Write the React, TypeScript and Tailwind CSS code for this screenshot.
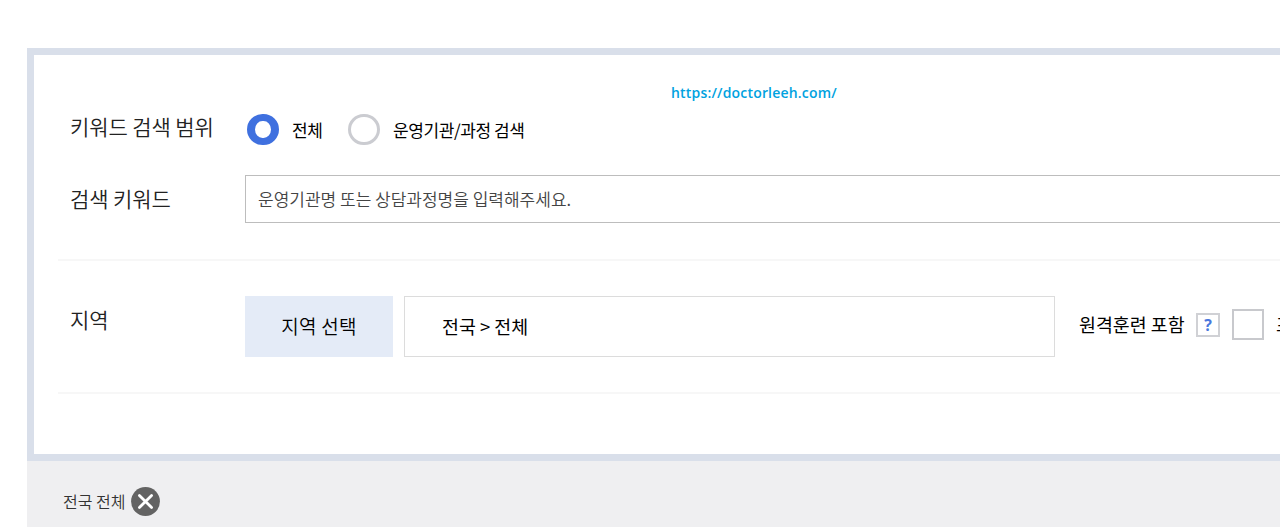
import { useState } from 'react'

type SearchScope = 'all' | 'course'

const SCOPE_OPTIONS: { label: string; value: SearchScope; width: string }[] = [
  { label: '전체', value: 'all', width: 'w-[101px]' },
  { label: '운영기관/과정 검색', value: 'course', width: '' },
]

function ScopeRadio({
  checked,
  label,
  onSelect,
}: {
  checked: boolean
  label: string
  onSelect: () => void
}) {
  return (
    <button
      aria-checked={checked}
      className="flex h-8 items-center whitespace-nowrap"
      onClick={onSelect}
      role="radio"
      type="button"
    >
      <span
        className={`mb-px h-[31px] w-8 shrink-0 rounded-full bg-white ${
          checked
            ? 'border-x-[8px] border-y-[7px] border-[#3f70df]'
            : 'border-[3px] border-[#cbccd1]'
        }`}
      />
      <span className="ml-[13px] text-[17px] leading-6 tracking-[-0.4px] text-black">
        {label}
      </span>
    </button>
  )
}

function App() {
  const [scope, setScope] = useState<SearchScope>('all')
  const [keyword, setKeyword] = useState('')

  return (
    <main className="h-[527px] overflow-hidden bg-white pl-[27px] pt-12 font-['Noto_Sans_CJK_KR',sans-serif]">
      <section className="h-[413px] border-y-[7px] border-l-[7px] border-[#d9dfea] pl-6">
        <div className="flex h-[59px] items-end pl-[613px]">
          <a
            className="mb-[11px] font-['Open_Sans','Noto_Sans',sans-serif] text-[14px] font-semibold leading-5 tracking-[0.18px] text-[#00a2e0]"
            href="https://doctorleeh.com/"
          >
            https://doctorleeh.com/
          </a>
        </div>

        <div className="flex h-8 items-center pl-3">
          <h2 className="w-[177px] shrink-0 pb-2 text-[21px] font-[350] leading-7 tracking-[-0.1px] text-[#222]">
            키워드 검색 범위
          </h2>
          <div className="flex" role="radiogroup">
            {SCOPE_OPTIONS.map((option) => (
              <div className={option.width} key={option.value}>
                <ScopeRadio
                  checked={scope === option.value}
                  label={option.label}
                  onSelect={() => setScope(option.value)}
                />
              </div>
            ))}
          </div>
        </div>

        <div className="mt-[29px] flex h-12 items-center pl-3">
          <h2 className="w-[175px] shrink-0 pb-[2px] text-[21px] font-[350] leading-7 tracking-[-0.1px] text-[#222]">
            검색 키워드
          </h2>
          <input
            className="h-12 flex-1 border-y border-l border-[#bdbdbd] bg-white pb-[2px] pl-3 text-[17px] font-[350] outline-none placeholder:text-[#444]"
            onChange={(event) => setKeyword(event.target.value)}
            placeholder="운영기관명 또는 상담과정명을 입력해주세요."
            type="text"
            value={keyword}
          />
        </div>

        <div className="mt-9 flex h-[135px] items-start overflow-hidden border-y-2 border-[#f7f7f7] pl-3 pt-[35px]">
          <h2 className="mt-[9px] w-[175px] shrink-0 text-[21px] font-[350] leading-7 text-[#222]">
            지역
          </h2>
          <button
            className="h-[61px] w-[148px] shrink-0 bg-[#e4ebf7] text-[19px] font-[350] tracking-[0.3px] text-black"
            type="button"
          >
            지역 선택
          </button>
          <div className="ml-[11px] flex h-[61px] w-[651px] shrink-0 items-center border border-[#dcdcdc] pl-[37px] text-[18.4px] text-black">
            전국 &gt; 전체
          </div>
          <div className="ml-6 flex h-[58px] shrink-0 items-center whitespace-nowrap text-[18.4px] text-black">
            <span className="w-[117px]">원격훈련 포함</span>
            <button
              className="grid h-6 w-6 place-items-center border-2 border-[#d0d1d5] font-['Open_Sans',sans-serif] text-[16px] font-bold leading-none text-[#4a78dd]"
              type="button"
            >
              ?
            </button>
            <span className="mb-[2px] ml-3 h-[31px] w-8 border-2 border-[#c8c9cd] bg-white" />
            <span className="ml-3 pb-px">포함</span>
          </div>
        </div>
      </section>

      <div className="flex h-[66px] items-center bg-[#efeff1] pl-9 pt-[14px]">
        <span className="w-[68px] text-[16px] font-[350] leading-6 text-[#333]">
          전국 전체
        </span>
        <button aria-label="전국 전체 삭제" type="button">
          <svg className="h-[29px] w-[29px]" fill="none" viewBox="0 0 30 30">
            <circle cx="15" cy="15" fill="#636363" r="14.9" />
            <path
              d="M8.7 8.7l12.6 12.6M21.3 8.7L8.7 21.3"
              stroke="#fff"
              strokeLinecap="round"
              strokeWidth="2.9"
            />
          </svg>
        </button>
      </div>
    </main>
  )
}

export default App
